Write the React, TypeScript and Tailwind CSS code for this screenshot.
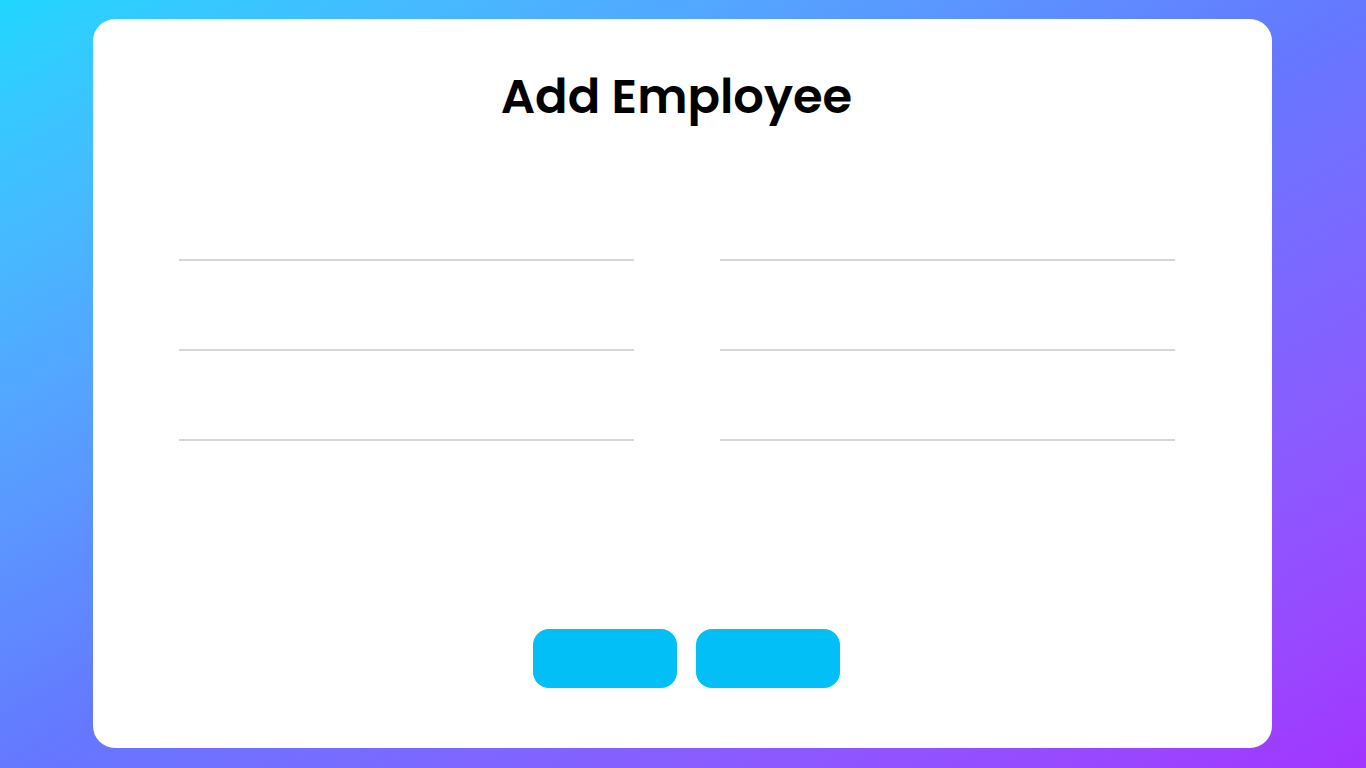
import React from "react";

function Field() {
  return (
    <div className="h-[90px] border-b-2 border-[#d6d6d6]">
      <input className="w-full h-full bg-transparent outline-none" />
    </div>
  );
}

export default function App() {
  return (
    <div className="w-[1366px] h-[768px] bg-gradient-to-br from-[#1ed6ff] via-[#6478ff] to-[#a234ff] pt-[19px] pl-[93px]">
      <div className="w-[1179px] h-[729px] bg-white rounded-[22px] flex flex-col">
        {/* Title */}
        <h1 className="mt-[48px] pr-[12px] text-center text-[48px] leading-[60px] font-semibold text-black font-['Poppins','Inter',sans-serif]">
          Add Employee
        </h1>

        {/* Form */}
        <div className="mt-[44px] ml-[86px] w-[996px] grid grid-cols-2 gap-x-[86px]">
          <div>
            <Field />
            <Field />
            <Field />
          </div>
          <div>
            <Field />
            <Field />
            <Field />
          </div>
        </div>

        {/* Actions */}
        <div className="mt-[188px] flex justify-center gap-[19px] pl-[8px]">
          <button className="w-[144px] h-[59px] rounded-[16px] bg-[#02c0f5]" />
          <button className="w-[144px] h-[59px] rounded-[16px] bg-[#02c0f5]" />
        </div>
      </div>
    </div>
  );
}
